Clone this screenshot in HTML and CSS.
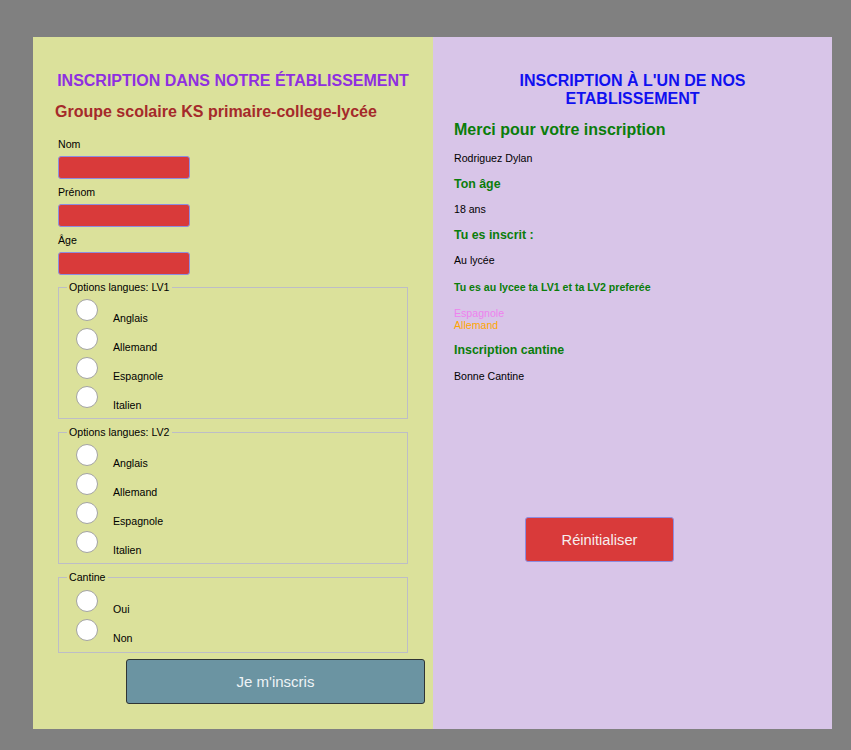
FILE: index.html
```html
<!DOCTYPE html>
<html lang="fr">
<head>
<meta charset="utf-8">
<title>Inscription</title>
<link rel="stylesheet" href="styles.css">
</head>
<body>
<div class="page">
  <section class="left">
    <h1 class="title">INSCRIPTION DANS NOTRE ÉTABLISSEMENT</h1>
    <h2 class="subtitle">Groupe scolaire KS primaire-college-lycée</h2>
    <form class="form">
      <label class="field-label" for="nom">Nom</label>
      <input class="text-input" id="nom" type="text">
      <label class="field-label" for="prenom">Prénom</label>
      <input class="text-input" id="prenom" type="text">
      <label class="field-label" for="age">Âge</label>
      <input class="text-input" id="age" type="text">

      <fieldset class="group">
        <legend class="legend">Options langues: LV1</legend>
        <div class="row"><input class="radio" type="radio" name="lv1"><span class="opt">Anglais</span></div>
        <div class="row"><input class="radio" type="radio" name="lv1"><span class="opt">Allemand</span></div>
        <div class="row"><input class="radio" type="radio" name="lv1"><span class="opt">Espagnole</span></div>
        <div class="row"><input class="radio" type="radio" name="lv1"><span class="opt">Italien</span></div>
      </fieldset>

      <fieldset class="group">
        <legend class="legend">Options langues: LV2</legend>
        <div class="row"><input class="radio" type="radio" name="lv2"><span class="opt">Anglais</span></div>
        <div class="row"><input class="radio" type="radio" name="lv2"><span class="opt">Allemand</span></div>
        <div class="row"><input class="radio" type="radio" name="lv2"><span class="opt">Espagnole</span></div>
        <div class="row"><input class="radio" type="radio" name="lv2"><span class="opt">Italien</span></div>
      </fieldset>

      <fieldset class="group group-cantine">
        <legend class="legend">Cantine</legend>
        <div class="row"><input class="radio" type="radio" name="cantine"><span class="opt">Oui</span></div>
        <div class="row"><input class="radio" type="radio" name="cantine"><span class="opt">Non</span></div>
      </fieldset>

      <button class="btn-submit" type="button">Je m'inscris</button>
    </form>
  </section>

  <section class="right">
    <h1 class="r-title">INSCRIPTION À L'UN DE NOS ETABLISSEMENT</h1>
    <h2 class="r-thanks">Merci pour votre inscription</h2>
    <p class="r-text m13">Rodriguez Dylan</p>
    <h4 class="r-sub m13">Ton âge</h4>
    <p class="r-text m12">18 ans</p>
    <h4 class="r-sub m13">Tu es inscrit :</h4>
    <p class="r-text m12">Au lycée</p>
    <h6 class="r-small m15">Tu es au lycee ta LV1 et ta LV2 preferée</h6>
    <div class="r-langs">
      <span class="lang-1">Espagnole</span>
      <span class="lang-2">Allemand</span>
    </div>
    <h4 class="r-sub m12">Inscription cantine</h4>
    <p class="r-text m13">Bonne Cantine</p>
    <button class="btn-reset" type="button">Réinitialiser</button>
  </section>
</div>
</body>
</html>
```

FILE: styles.css
```css
* {
  box-sizing: border-box;
}

body {
  margin: 0;
  background: #808080;
  font-family: "Liberation Sans", Arial, sans-serif;
  color: #000;
}

.page {
  margin: 37px 0 0 33px;
  width: 799px;
  height: 692px;
  display: grid;
  grid-template-columns: 400px 399px;
}

.left {
  background: #dbe19b;
  padding-top: 35px;
}

.right {
  background: #d8c5e8;
  padding: 35px 21px 0 21px;
}

/* ---------- left column ---------- */

.title {
  margin: 0;
  font-size: 16px;
  line-height: 18px;
  font-weight: bold;
  text-align: center;
  color: #8f2fe0;
}

.subtitle {
  margin: 13px 0 0 0;
  padding-left: 22px;
  font-size: 16px;
  line-height: 18px;
  font-weight: bold;
  color: #a52a2a;
}

.form {
  margin: 17px 0 0 0;
  padding-left: 25px;
  display: flex;
  flex-direction: column;
  align-items: flex-start;
}

.field-label {
  display: block;
  font-size: 10.6px;
  line-height: 12px;
  margin-bottom: 6px;
}

.text-input {
  width: 132px;
  height: 23px;
  margin: 0 0 7px 0;
  padding: 0 4px;
  border: 1px solid #8d8de0;
  border-radius: 3px;
  background: #d93a3a;
}

.text-input + .group {
  margin-top: -1px;
}

.group {
  width: 350px;
  margin: 7px 0 0 0;
  padding: 6px 0 6px 8px;
  border: 1px solid #bdbdc6;
  min-inline-size: 0;
  display: flex;
  flex-direction: column;
  gap: 3px;
}

.group-cantine {
  padding-top: 7px;
  padding-bottom: 7px;
}

.legend {
  padding: 0 2px;
  font-size: 10.6px;
  line-height: 12px;
}

.row {
  display: flex;
  align-items: flex-start;
  padding-left: 9px;
  height: 26px;
}

.radio {
  appearance: none;
  -webkit-appearance: none;
  width: 22px;
  height: 22px;
  margin: 0;
  border: 1px solid #a3a3a3;
  border-radius: 50%;
  background: #fff;
  flex: none;
}

.opt {
  margin-left: 15px;
  padding-top: 12px;
  font-size: 10.6px;
  line-height: 14px;
}

.btn-submit {
  margin: 6px 0 0 68px;
  width: 299px;
  height: 45px;
  background: #6b94a2;
  border: 1px solid #2f3435;
  border-radius: 3px;
  color: #eef3f6;
  font-family: "Liberation Sans", Arial, sans-serif;
  font-size: 15px;
}

/* ---------- right column ---------- */

.r-title {
  margin: 0;
  font-size: 16px;
  line-height: 18px;
  font-weight: bold;
  text-align: center;
  color: #1010f0;
}

.r-thanks {
  margin: 13px 0 0 0;
  font-size: 16px;
  line-height: 18px;
  font-weight: bold;
  color: #0a7d0a;
}

.r-text {
  margin: 0;
  font-size: 10.6px;
  line-height: 12px;
}

.r-sub {
  margin: 0;
  font-size: 12.4px;
  line-height: 14px;
  font-weight: bold;
  color: #0a7d0a;
}

.r-small {
  margin: 0;
  font-size: 10.6px;
  line-height: 12px;
  font-weight: bold;
  color: #0a7d0a;
}

.r-langs {
  margin-top: 14px;
  display: flex;
  flex-direction: column;
  font-size: 10.6px;
  line-height: 12px;
}

.lang-1 {
  color: #ee82ee;
}

.lang-2 {
  color: #ffa500;
}

.m11 { margin-top: 11px; }
.m12 { margin-top: 12px; }
.m13 { margin-top: 13px; }
.m14 { margin-top: 14px; }
.m15 { margin-top: 15px; }

.btn-reset {
  display: block;
  margin: 135px 0 0 71px;
  width: 149px;
  height: 45px;
  background: #d93a3a;
  border: 1px solid #8d8de0;
  border-radius: 3px;
  color: #f6eeee;
  font-family: "Liberation Sans", Arial, sans-serif;
  font-size: 14.7px;
}
```
